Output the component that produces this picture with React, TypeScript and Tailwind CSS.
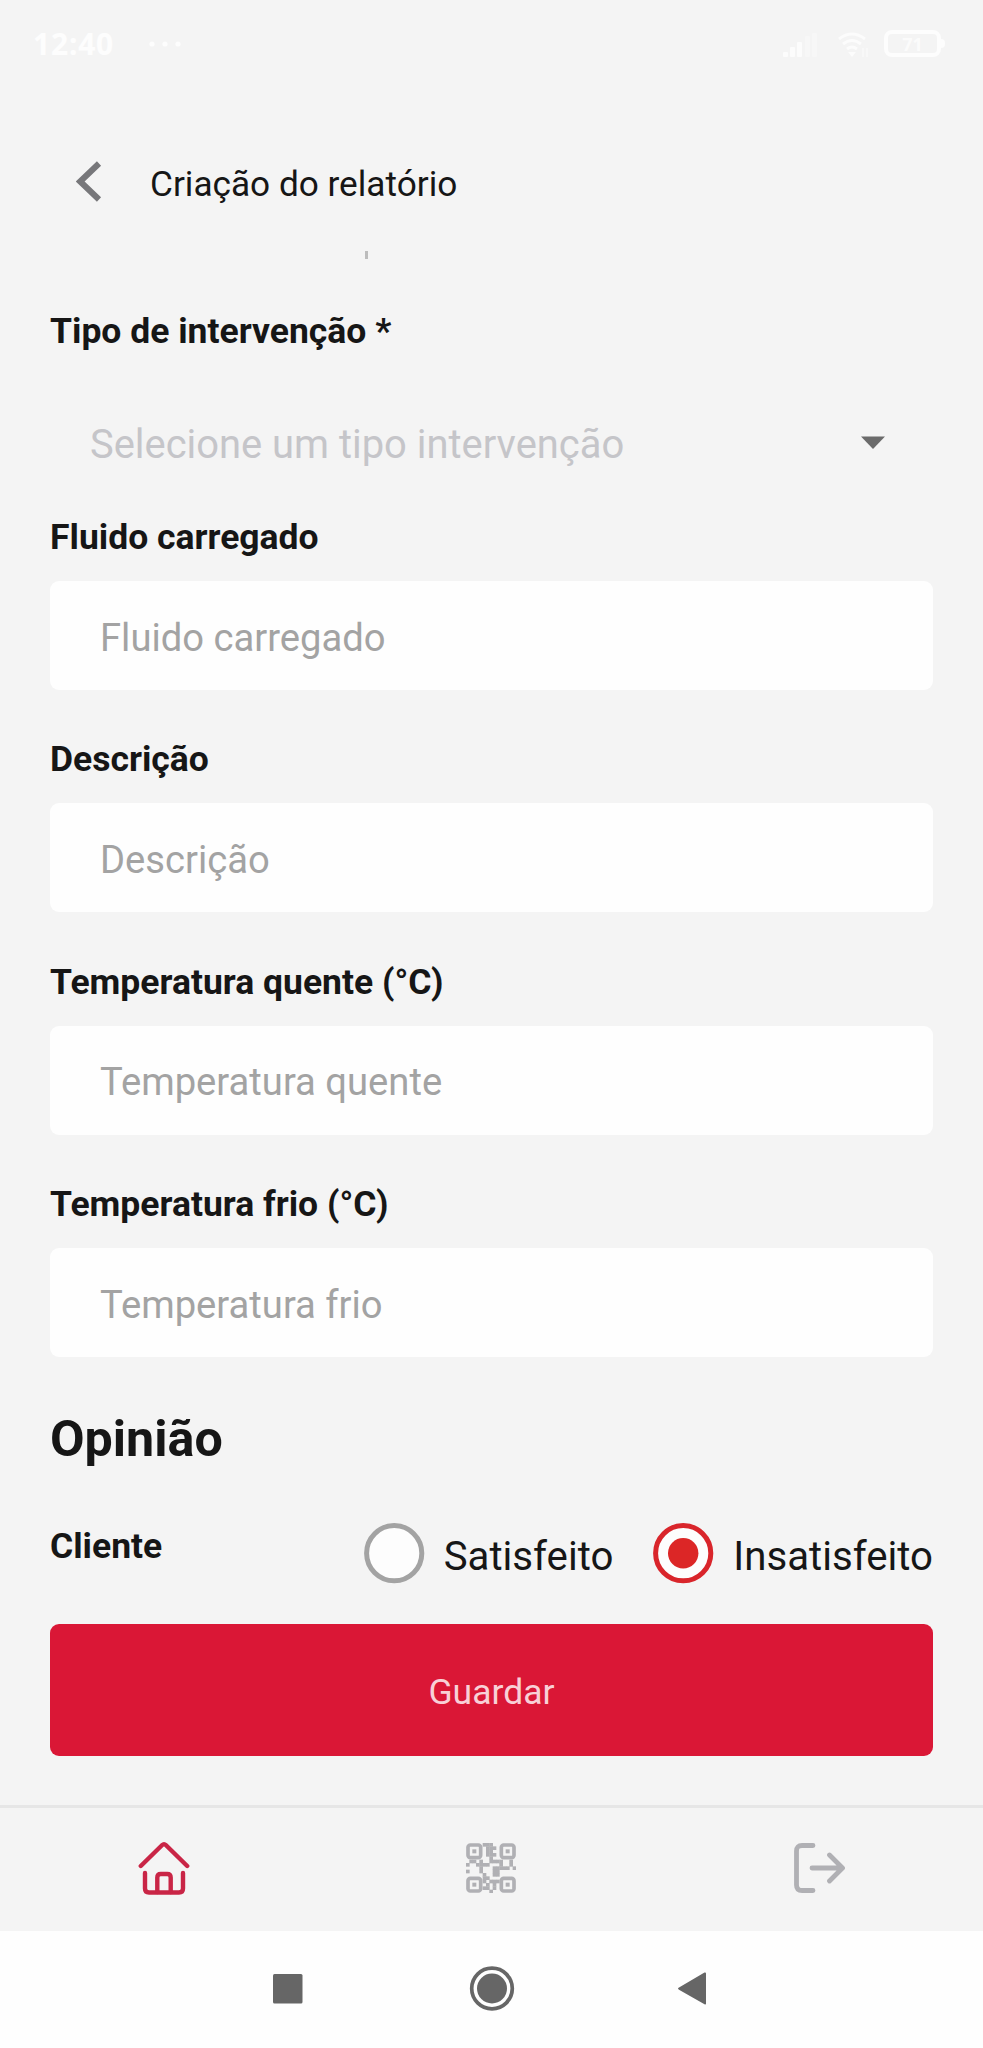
import React from "react";

const fields = [
  { label: "Fluido carregado", placeholder: "Fluido carregado" },
  { label: "Descrição", placeholder: "Descrição" },
  { label: "Temperatura quente (°C)", placeholder: "Temperatura quente" },
  { label: "Temperatura frio (°C)", placeholder: "Temperatura frio" },
];

function StatusBar() {
  return (
    <header className="flex h-[87px] items-center justify-between pl-[33px] pr-[38px] text-white/80">
      <div className="flex items-center gap-[34px]">
        <span className="font-['Noto_Sans','Open_Sans',sans-serif] text-[30px] font-bold leading-[40px] tracking-[0.8px]">
          12:40
        </span>
        <svg width="34" height="8" viewBox="0 0 34 8" fill="currentColor">
          <circle cx="4" cy="4" r="2.6" />
          <circle cx="17" cy="4" r="2.6" />
          <circle cx="30" cy="4" r="2.6" />
        </svg>
      </div>
      <div className="flex items-center text-white/70">
        <svg width="37" height="28" viewBox="0 0 37 28" fill="currentColor">
          <rect x="1" y="22" width="5" height="5" rx="1" />
          <rect x="8" y="17" width="5" height="10" rx="1" />
          <rect x="15" y="12" width="5" height="15" rx="1" />
          <rect x="23" y="6" width="5" height="21" rx="1" opacity="0.45" />
          <rect x="30" y="3" width="5" height="24" rx="1" opacity="0.45" />
        </svg>
        <svg className="ml-[19px]" width="32" height="28" viewBox="0 0 32 28" fill="none" stroke="currentColor" strokeWidth="3">
          <path d="M1 9Q14 -1 27 9M5 14Q14 7 23 14M9 19Q14 15 19 19" />
          <path d="M10 22L14 27L18 22Z" fill="currentColor" stroke="none" />
          <path d="M25 18V27M29 18V27" strokeWidth="2" opacity="0.5" />
        </svg>
        <div className="ml-[14px] flex h-[27px] w-[57px] items-center justify-center rounded-[8px] border-[4px] border-white/80 font-['Noto_Sans',sans-serif] text-[18px] font-bold leading-none">
          71
        </div>
        <div className="h-[9px] w-[4px] rounded-r bg-white/80" />
      </div>
    </header>
  );
}

function Radio({ label, checked }: { label: string; checked?: boolean }) {
  return (
    <div className="flex items-center">
      <svg width="61" height="61" viewBox="0 0 61 61">
        <circle cx="30.2" cy="30.2" r="27.6" fill="#fdfdfd" stroke={checked ? "#d9252b" : "#a3a3a3"} strokeWidth="5" />
        {checked && <circle cx="30.2" cy="30.2" r="15.2" fill="#dc2626" />}
      </svg>
      <span className="mt-[6px] pl-[19px] text-[40.2px] leading-[46px]">{label}</span>
    </div>
  );
}

function HomeIcon() {
  return (
    <svg width="52" height="54" viewBox="0 0 52 54" fill="none" stroke="#c92546" strokeWidth="4.4" strokeLinecap="round" strokeLinejoin="round">
      <path d="M2.8 25L24.2 4Q26 2.2 27.8 4L49.2 25" />
      <path d="M7 32V47.5Q7 51.5 11 51.5H41Q45 51.5 45 47.5V32" />
      <path d="M19.3 51V36.5Q19.3 33 22.8 33H29.2Q32.7 33 32.7 36.5V51" />
    </svg>
  );
}

const qrModules = [
  ".....XXX.......",
  "......XXX......",
  "......XX.......",
  "......XXX......",
  ".......X.......",
  ".XX.X..XXXX..X.",
  "X..XXXX...X..X.",
  "....X...XXXXX.X",
  "X...X...XX.....",
  ".....X..XX.....",
  ".....XX........",
  ".....X.XXX.....",
  "......X.X......",
  ".....XX.X......",
  ".......X.......",
];

function QrIcon() {
  return (
    <svg width="50" height="50" viewBox="0 0 150 150" fill="none" stroke="#b0b0b4" strokeWidth="11">
      {[[6, 6], [106, 6], [6, 106], [106, 106]].map(([x, y]) => (
        <g key={`${x}-${y}`}>
          <rect x={x} y={y} width="38" height="38" rx="7" />
          <rect x={x + 13} y={y + 13} width="12" height="12" fill="#b0b0b4" stroke="none" />
        </g>
      ))}
      <g fill="#b0b0b4" stroke="none">
        {qrModules.flatMap((row, y) =>
          row.split("").map((cell, x) =>
            cell === "X" ? <rect key={`${x}-${y}`} x={x * 10} y={y * 10} width="11" height="11" /> : null,
          ),
        )}
      </g>
    </svg>
  );
}

function LogoutIcon() {
  return (
    <svg width="52" height="52" viewBox="0 0 52 52" fill="none" stroke="#b0b0b4" strokeWidth="4.8" strokeLinecap="round" strokeLinejoin="round">
      <path d="M20 3.5H9Q3.5 3.5 3.5 9V43Q3.5 48.5 9 48.5H20" />
      <path d="M19 26H49M36.5 13L49.5 26L36.5 39" />
    </svg>
  );
}

export default function App() {
  return (
    <div className="flex h-[2048px] w-[983px] flex-col overflow-hidden bg-[#f4f4f4] font-[Roboto,sans-serif] text-[35.2px] leading-[42px] text-[#161616]">
      <StatusBar />
      <div className="flex h-[158px] items-start pl-[76px] pt-[74px]">
        <svg width="26" height="42" viewBox="0 0 26 42" fill="none" stroke="#77777a" strokeWidth="6">
          <path d="M23 2.5L4.2 20.5L23 38.5" />
        </svg>
        <h1 className="pl-[48px] pt-[2px]">Criação do relatório</h1>
      </div>
      <div className="flex h-[65px] items-start pl-[365px] pt-[6px]">
        <div className="h-[8px] w-[3px] bg-[#bcbcbc]" />
      </div>

      <main className="flex flex-col px-[50px]">
        <div className="h-[77px] text-[35.5px] font-bold">Tipo de intervenção *</div>
        <div className="flex h-[115px] items-center justify-between pl-[40px] pr-[47px] text-[39.9px] text-[#c5c5c9]">
          <span>Selecione um tipo intervenção</span>
          <svg className="mb-[4px]" width="26" height="14" viewBox="0 0 26 14" fill="#6b6b6b">
            <path d="M1 0.5H25L13 13Z" />
          </svg>
        </div>
        <div className="flex flex-col pt-[14px]">
          {fields.map((field) => (
            <div key={field.label} className="flex h-[222.3px] flex-col">
              <div className="h-[65.2px] text-[35.5px] font-bold">{field.label}</div>
              <div className="flex h-[109px] items-center rounded-[9px] bg-[#fefefe] pl-[50px] pt-[4px] text-[38.2px] text-[#a3a3a3]">
                {field.placeholder}
              </div>
            </div>
          ))}
        </div>
        <h2 className="h-[118px] pt-[4px] text-[50.2px] font-bold leading-[60px]">Opinião</h2>
        <div className="flex h-[101px] items-start justify-between">
          <span className="pt-[2px] text-[35.5px] font-bold">Cliente</span>
          <div className="flex gap-[40px]">
            <Radio label="Satisfeito" />
            <Radio label="Insatisfeito" checked />
          </div>
        </div>
        <button className="flex h-[132px] items-center justify-center rounded-[9px] bg-[#da1736] pt-[4px] text-[35.5px] text-[#f8d0d7]">
          Guardar
        </button>
      </main>

      <nav className="mt-auto flex h-[126px] shrink-0 items-center justify-around border-t-[3px] border-[#e6e6e6] pb-[4px]">
        <HomeIcon />
        <QrIcon />
        <LogoutIcon />
      </nav>
      <footer className="flex h-[117px] shrink-0 items-center bg-[#fefefe] pb-[3px] pl-[272px]">
        <svg width="436" height="46" viewBox="0 0 436 46" fill="#666666">
          <rect x="1" y="9" width="29.5" height="29.5" rx="1.5" />
          <circle cx="220" cy="23.5" r="20.3" fill="none" stroke="#666666" strokeWidth="3.7" />
          <circle cx="220" cy="23.5" r="15" />
          <path d="M407 22.5L432.5 7.5Q434 7 434 8.5V38.5Q434 40 432.5 39.2L407 24.7Q405 23.5 407 22.5Z" />
        </svg>
      </footer>
    </div>
  );
}
